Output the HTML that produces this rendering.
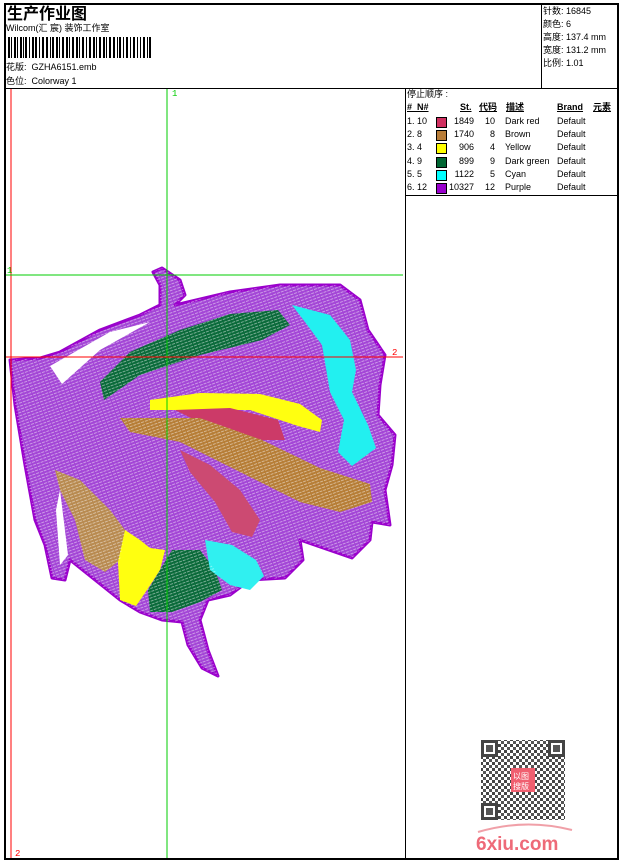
<!DOCTYPE html>
<html><head><meta charset="utf-8"><style>
body{margin:0;width:620px;height:860px;background:#fff;position:relative;overflow:hidden;font-family:"Liberation Sans","Noto Sans CJK SC",sans-serif;font-size:9px;color:#000}
.a{position:absolute;white-space:nowrap;line-height:1}
.l{position:absolute;background:#000}
</style></head><body>
<div class="l" style="left:4px;top:3px;width:615px;height:2px"></div>
<div class="l" style="left:4px;top:858px;width:615px;height:2px"></div>
<div class="l" style="left:4px;top:3px;width:2px;height:857px"></div>
<div class="l" style="left:617px;top:3px;width:2px;height:857px"></div>
<div class="l" style="left:4px;top:88px;width:615px;height:1px"></div>
<div class="l" style="left:541px;top:3px;width:1px;height:86px"></div>
<div class="l" style="left:405px;top:88px;width:1px;height:771px"></div>
<div class="l" style="left:405px;top:195px;width:214px;height:1px"></div>

<div class="a" style="left:7px;top:4px;font-size:16px;font-weight:bold;font-family:'Noto Sans CJK SC',sans-serif">生产作业图</div>
<div class="a" style="left:6px;top:24px;font-size:9px">Wilcom(汇 宸) 装饰工作室</div>
<svg style="position:absolute;left:8px;top:37px" width="145" height="21">
<g fill="#000">
<rect x="0" width="2" height="21"/><rect x="3" width="1" height="21"/><rect x="6" width="2" height="21"/><rect x="9" width="1" height="21"/><rect x="12" width="2" height="21"/><rect x="15" width="1" height="21"/><rect x="17" width="2" height="21"/><rect x="21" width="1" height="21"/><rect x="24" width="2" height="21"/><rect x="27" width="2" height="21"/><rect x="31" width="1" height="21"/><rect x="34" width="2" height="21"/><rect x="38" width="2" height="21"/><rect x="42" width="1" height="21"/><rect x="44" width="2" height="21"/><rect x="48" width="2" height="21"/><rect x="51" width="1" height="21"/><rect x="54" width="2" height="21"/><rect x="58" width="2" height="21"/><rect x="61" width="1" height="21"/><rect x="64" width="2" height="21"/><rect x="68" width="2" height="21"/><rect x="71" width="1" height="21"/><rect x="74" width="2" height="21"/><rect x="78" width="1" height="21"/><rect x="81" width="2" height="21"/><rect x="85" width="2" height="21"/><rect x="88" width="1" height="21"/><rect x="91" width="2" height="21"/><rect x="95" width="2" height="21"/><rect x="98" width="1" height="21"/><rect x="101" width="2" height="21"/><rect x="105" width="2" height="21"/><rect x="109" width="1" height="21"/><rect x="111" width="2" height="21"/><rect x="115" width="1" height="21"/><rect x="118" width="2" height="21"/><rect x="122" width="1" height="21"/><rect x="125" width="2" height="21"/><rect x="129" width="1" height="21"/><rect x="132" width="1" height="21"/><rect x="135" width="2" height="21"/><rect x="139" width="1" height="21"/><rect x="141" width="2" height="21"/>
</g></svg>
<div class="a" style="left:6px;top:63px">花版:&nbsp; GZHA6151.emb</div>
<div class="a" style="left:6px;top:77px">色位:&nbsp; Colorway 1</div>

<div class="a" style="left:543px;top:7px">针数: 16845</div>
<div class="a" style="left:543px;top:20px">颜色: 6</div>
<div class="a" style="left:543px;top:33px">高度: 137.4 mm</div>
<div class="a" style="left:543px;top:46px">宽度: 131.2 mm</div>
<div class="a" style="left:543px;top:59px">比例: 1.01</div>

<div class="a" style="left:407px;top:90px">停止顺序 :</div>
<div class="a" style="left:407px;top:103px;font-weight:bold;text-decoration:underline">#&nbsp; N#</div>
<div class="a" style="left:460px;top:103px;font-weight:bold;text-decoration:underline">St.</div>
<div class="a" style="left:479px;top:103px;font-weight:bold;text-decoration:underline">代码</div>
<div class="a" style="left:506px;top:103px;font-weight:bold;text-decoration:underline">描述</div>
<div class="a" style="left:557px;top:103px;font-weight:bold;text-decoration:underline">Brand</div>
<div class="a" style="left:593px;top:103px;font-weight:bold;text-decoration:underline">元素</div>

<div style="position:absolute;left:407px;top:117px;width:210px">
<div style="position:relative;height:13.2px"><span class="a" style="left:0">1. 10</span><span class="a" style="left:29px;top:0;width:9px;height:9px;background:#d03060;border:1px solid #000"></span><span class="a" style="right:143px">1849</span><span class="a" style="right:122px">10</span><span class="a" style="left:98px">Dark red</span><span class="a" style="left:150px">Default</span></div>
<div style="position:relative;height:13.2px"><span class="a" style="left:0">2. 8</span><span class="a" style="left:29px;top:0;width:9px;height:9px;background:#b87d38;border:1px solid #000"></span><span class="a" style="right:143px">1740</span><span class="a" style="right:122px">8</span><span class="a" style="left:98px">Brown</span><span class="a" style="left:150px">Default</span></div>
<div style="position:relative;height:13.2px"><span class="a" style="left:0">3. 4</span><span class="a" style="left:29px;top:0;width:9px;height:9px;background:#ffff00;border:1px solid #000"></span><span class="a" style="right:143px">906</span><span class="a" style="right:122px">4</span><span class="a" style="left:98px">Yellow</span><span class="a" style="left:150px">Default</span></div>
<div style="position:relative;height:13.2px"><span class="a" style="left:0">4. 9</span><span class="a" style="left:29px;top:0;width:9px;height:9px;background:#006633;border:1px solid #000"></span><span class="a" style="right:143px">899</span><span class="a" style="right:122px">9</span><span class="a" style="left:98px">Dark green</span><span class="a" style="left:150px">Default</span></div>
<div style="position:relative;height:13.2px"><span class="a" style="left:0">5. 5</span><span class="a" style="left:29px;top:0;width:9px;height:9px;background:#00ffff;border:1px solid #000"></span><span class="a" style="right:143px">1122</span><span class="a" style="right:122px">5</span><span class="a" style="left:98px">Cyan</span><span class="a" style="left:150px">Default</span></div>
<div style="position:relative;height:13.2px"><span class="a" style="left:0">6. 12</span><span class="a" style="left:29px;top:0;width:9px;height:9px;background:#9900cc;border:1px solid #000"></span><span class="a" style="right:143px">10327</span><span class="a" style="right:122px">12</span><span class="a" style="left:98px">Purple</span><span class="a" style="left:150px">Default</span></div>
</div>

<svg style="position:absolute;left:0;top:0" width="620" height="860">
<defs>
<pattern id="h" width="4" height="3" patternUnits="userSpaceOnUse" patternTransform="rotate(-20)">
<rect width="4" height="3" fill="none"/><rect y="1" width="3" height="1" fill="#fff" opacity="0.45"/>
</pattern>
<pattern id="q" width="6" height="6" patternUnits="userSpaceOnUse">
<rect width="6" height="6" fill="#fff"/><rect width="3" height="3" fill="#444"/><rect x="3" y="3" width="3" height="3" fill="#555"/>
</pattern>
</defs>
<g stroke-linejoin="round" id="bf">
<path fill="#a346d6" stroke="#9a00cc" stroke-width="3" d="M10,360 L40,358 L60,352 L100,330 L140,315 L160,305 L160,285 L153,272 L162,268 L180,280 L185,295 L175,305 L230,292 L280,285 L340,285 L360,300 L368,330 L385,355 L380,385 L378,415 L395,435 L392,465 L385,490 L390,525 L372,522 L370,540 L352,558 L300,540 L303,560 L285,578 L250,580 L230,595 L208,600 L200,620 L208,650 L218,676 L202,668 L188,645 L182,622 L162,620 L140,612 L120,600 L105,588 L85,572 L70,560 L65,580 L52,578 L45,545 L35,520 L25,465 L15,405 Z"/>
<path fill="url(#h)" d="M10,360 L40,358 L60,352 L100,330 L140,315 L160,305 L160,285 L153,272 L162,268 L180,280 L185,295 L175,305 L230,292 L280,285 L340,285 L360,300 L368,330 L385,355 L380,385 L378,415 L395,435 L392,465 L385,490 L390,525 L372,522 L370,540 L352,558 L300,540 L303,560 L285,578 L250,580 L230,595 L208,600 L200,620 L208,650 L218,676 L202,668 L188,645 L182,622 L162,620 L140,612 L120,600 L105,588 L85,572 L70,560 L65,580 L52,578 L45,545 L35,520 L25,465 L15,405 Z"/>
<path fill="#fff" d="M50,366 L62,384 L100,350 L150,322 L110,332 Z"/>
<path fill="#fff" d="M60,490 L68,555 L60,565 L56,510 Z"/>
<path fill="#0a6a3a" d="M100,382 L130,352 L180,330 L230,314 L278,310 L290,325 L262,340 L200,355 L140,375 L104,400 Z"/>
<path fill="#22f0f0" d="M292,305 L330,315 L350,340 L356,370 L352,392 L368,425 L376,448 L352,466 L338,452 L344,420 L330,392 L322,345 L305,322 Z"/>
<path fill="#ffff10" d="M150,400 L200,393 L260,394 L300,404 L322,420 L320,432 L298,426 L250,410 L180,410 L150,410 Z"/>
<path fill="#cc3a68" d="M175,410 L230,408 L278,420 L285,440 L250,440 L205,425 Z"/>
<path fill="#b67d36" d="M120,418 L200,418 L262,440 L320,468 L370,484 L372,502 L340,512 L300,502 L240,472 L180,442 L130,432 Z"/>
<path fill="#cc4a72" d="M180,450 L210,465 L240,490 L260,520 L252,537 L232,532 L215,502 L190,472 Z"/>
<path fill="#b88a50" d="M55,470 L80,480 L110,510 L125,530 L120,560 L105,572 L85,560 L75,520 L60,490 Z"/>
<path fill="#ffff10" d="M125,530 L140,540 L150,548 L165,550 L160,570 L147,590 L136,606 L120,600 L118,562 Z"/>
<path fill="#0a6a3a" d="M172,550 L200,550 L215,570 L222,590 L200,602 L172,612 L150,612 L148,590 L160,570 Z"/>
<path fill="#30f0f0" d="M205,540 L232,545 L256,560 L264,576 L250,590 L230,585 L210,570 Z"/>
<path fill="url(#h)" d="M100,382 L130,352 L180,330 L230,314 L278,310 L290,325 L262,340 L200,355 L140,375 L104,400 Z M120,418 L200,418 L262,440 L320,468 L370,484 L372,502 L340,512 L300,502 L240,472 L180,442 L130,432 Z M55,470 L80,480 L110,510 L125,530 L120,560 L105,572 L85,560 L75,520 L60,490 Z M172,550 L200,550 L215,570 L222,590 L200,602 L172,612 L150,612 L148,590 L160,570 Z"/>
</g>
<line x1="11" y1="89" x2="11" y2="858" stroke="#f00"/>
<line x1="167" y1="89" x2="167" y2="858" stroke="#0c0"/>
<line x1="6" y1="275" x2="403" y2="275" stroke="#0c0"/>
<line x1="6" y1="357" x2="403" y2="357" stroke="#f00"/>
<text x="172" y="96" fill="#0c0" font-size="9" font-family="Liberation Mono">1</text>
<text x="7" y="273" fill="#0c0" font-size="9" font-family="Liberation Mono">1</text>
<text x="392" y="355" fill="#f00" font-size="9" font-family="Liberation Mono">2</text>
<text x="15" y="856" fill="#f00" font-size="9" font-family="Liberation Mono">2</text>
<g fill="#555">
<rect x="481" y="740" width="84" height="80" fill="url(#q)"/>
<rect x="481" y="740" width="17" height="17" fill="#444"/><rect x="484" y="743" width="11" height="11" fill="#fff"/><rect x="486" y="745" width="7" height="7"/>
<rect x="548" y="740" width="17" height="17" fill="#444"/><rect x="551" y="743" width="11" height="11" fill="#fff"/><rect x="553" y="745" width="7" height="7"/>
<rect x="481" y="803" width="17" height="17" fill="#444"/><rect x="484" y="806" width="11" height="11" fill="#fff"/><rect x="486" y="808" width="7" height="7"/>
<rect x="511" y="768" width="24" height="24" fill="#f06070"/>
</g>
<text x="513" y="779" fill="#fff" font-size="8" font-family="Noto Sans CJK SC">以图</text>
<text x="513" y="789" fill="#fff" font-size="8" font-family="Noto Sans CJK SC">搜版</text>
<path d="M478,832 Q525,818 572,830" fill="none" stroke="#f0a0a8" stroke-width="2"/>
<text x="476" y="850" fill="#ee6a78" font-size="19" font-weight="bold" font-family="Liberation Sans">6xiu.com</text>
</svg>
</body></html>
